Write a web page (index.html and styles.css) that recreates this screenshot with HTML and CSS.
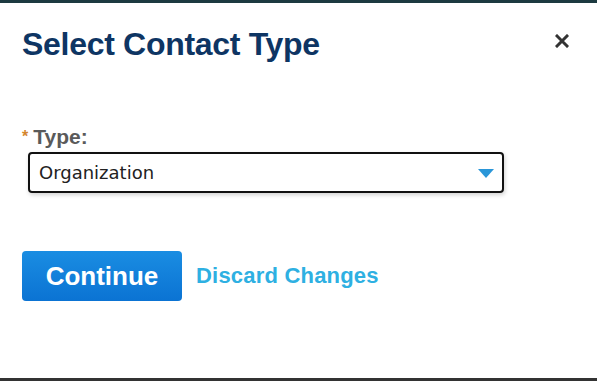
FILE: index.html
```html
<!DOCTYPE html>
<html>
<head>
<meta charset="utf-8">
<link rel="stylesheet" href="styles.css">
</head>
<body>
<div class="page">
  <div class="dialog">
    <div class="header">
      <h1 class="title">Select Contact Type</h1>
      <button class="close" aria-label="Close">
        <svg width="14" height="14" viewBox="0 0 14 14"><path d="M2 2 L12 12 M12 2 L2 12" stroke="#333" stroke-width="3" stroke-linecap="square"/></svg>
      </button>
    </div>
    <div class="field">
      <div class="label"><span class="req">*</span>Type:</div>
      <div class="select">
        <span class="value">Organization</span>
        <svg class="caret" width="16" height="9" viewBox="0 0 16 9"><path d="M0 0 H16 L8 9 Z" fill="#2a96d8"/></svg>
      </div>
    </div>
    <div class="actions">
      <button class="btn-primary">Continue</button>
      <a class="link" href="#">Discard Changes</a>
    </div>
  </div>
</div>
</body>
</html>
```
FILE: styles.css
```css
html, body {
  margin: 0;
  padding: 0;
  background: #ffffff;
}
.page {
  width: 597px;
  height: 381px;
  box-sizing: border-box;
  border-top: 3px solid #1d3a40;
  border-bottom: 3px solid #333333;
  background: #ffffff;
}
.dialog {
  padding: 23px 0 0 22px;
  font-family: "Liberation Sans", Arial, sans-serif;
}
.header {
  display: flex;
  align-items: center;
  justify-content: space-between;
  padding-right: 28px;
}
.title {
  margin: 0;
  font-size: 32px;
  line-height: 36px;
  font-weight: bold;
  color: #0e3563;
  letter-spacing: -0.3px;
}
.close {
  border: 0;
  background: none;
  padding: 0;
  width: 14px;
  height: 14px;
  display: flex;
  margin-top: -6px;
}
.field {
  margin-top: 63px;
}
.label {
  font-size: 21px;
  line-height: 24px;
  font-weight: bold;
  color: #5a5a5a;
  display: flex;
  align-items: baseline;
}
.req {
  color: #d4862e;
  font-size: 16px;
  margin-right: 5px;
  position: relative;
  top: -2px;
}
.select {
  margin-top: 1px;
  margin-left: 6px;
  width: 476px;
  height: 41px;
  box-sizing: border-box;
  border: 2px solid #111;
  border-radius: 4px;
  box-shadow: 1px 2px 4px rgba(0,0,0,0.18);
  display: flex;
  align-items: center;
  justify-content: space-between;
  padding: 0 8px 0 9px;
}
.value {
  font-family: "DejaVu Sans", Verdana, sans-serif;
  font-size: 18px;
  color: #222;
}
.caret {
  margin-top: 2px;
}
.actions {
  margin-top: 58px;
  display: flex;
  align-items: center;
  gap: 14px;
}
.btn-primary {
  width: 160px;
  height: 50px;
  border: 0;
  border-radius: 4px;
  background: linear-gradient(#1a8de2, #0b73d3);
  color: #fff;
  font-family: "Liberation Sans", Arial, sans-serif;
  font-size: 26px;
  font-weight: bold;
  padding: 0;
}
.link {
  font-size: 22px;
  font-weight: bold;
  color: #2eb0e2;
  text-decoration: none;
  letter-spacing: 0.2px;
}
```
